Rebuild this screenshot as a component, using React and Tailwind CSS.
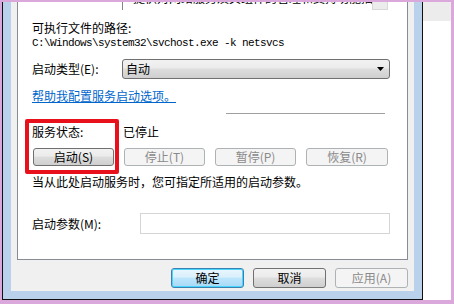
const cjk = "font-['Noto_Sans_CJK_SC',sans-serif]";

const WinButton = ({ label, kind = "normal", className = "" }) => {
  const styles = {
    normal:
      "border-[#707070] bg-[linear-gradient(#f2f2f2,#ebebeb_45%,#dddddd_50%,#cfcfcf)] text-black",
    disabled: "border-[#adb2b5] bg-[#f4f4f4] text-[#8a8a8a]",
    default:
      "border-[#3c7fb1] bg-[linear-gradient(#eaf6fd,#d9f0fc_45%,#bee6fd_50%,#a7d9f5)] text-black shadow-[inset_0_0_0_1px_#48d6fc]",
  };
  return (
    <div
      className={`${styles[kind]} ${className} flex items-center justify-center rounded-[3px] border text-[12px] leading-[14px]`}
    >
      {label}
    </div>
  );
};

export default function App() {
  return (
    <div
      className={`${cjk} flex h-[304px] w-[454px] overflow-hidden bg-[#dba8db] pb-[4px] pl-[2px] pr-[3px] pt-[2px] text-black`}
    >
      {/* window frame */}
      <div className="flex w-[421px] flex-col border-x border-b border-[#101010] bg-[#b9d1ea] px-[8px] pb-[8px]">
        <div className="flex flex-1 flex-col bg-[#f0f0f0] px-[6px]">
          {/* tab panel */}
          <div className="relative flex h-[258px] flex-col border-x border-b border-[#898c95] bg-white pl-[14px]">
            {/* description box, scrolled out of view */}
            <div className="ml-[90px] flex h-[8px] w-[266px] border-l border-[#828790]">
              <div className="flex flex-1 flex-col justify-end overflow-hidden pb-[5px] pl-[10px]">
                <div className="shrink-0 whitespace-nowrap text-[12px] leading-[14px]">
                  提供对网络服务及其组件的管理和支持功能描述
                </div>
              </div>
              <div className="h-[8px] w-[16px] border border-t-0 border-[#d8d8d8] bg-[#ececec]" />
            </div>

            <div className="mt-[11px] text-[12px] leading-[14px]">可执行文件的路径:</div>
            <div className="mt-[2px] font-['Liberation_Mono',monospace] text-[11px] leading-[12px] tracking-[-0.6px]">
              C:\Windows\system32\svchost.exe -k netsvcs
            </div>

            <div className="mt-[10px] flex h-[20px] items-center">
              <div className="w-[90px] text-[12px] leading-[14px]">启动类型(E):</div>
              <div className="flex h-[20px] w-[268px] items-center justify-between rounded-[3px] border border-[#707070] bg-[linear-gradient(#f2f2f2,#ebebeb_45%,#dddddd_50%,#cfcfcf)] pl-[3px] pr-[5px]">
                <span className="text-[12px] leading-[14px]">自动</span>
                <svg width="7" height="4" viewBox="0 0 7 4">
                  <path d="M0 0H7L3.5 4Z" fill="#000" />
                </svg>
              </div>
            </div>

            <div className="mt-[10px] text-[12px] leading-[14px] text-[#0066cc] underline">
              帮助我配置服务启动选项。
            </div>

            <div className="ml-[194px] mt-[10px] h-px w-[159px] bg-[#a0a0a0]" />

            <div className="mt-[11px] flex text-[12px] leading-[14px]">
              <div className="w-[91px]">服务状态:</div>
              <div>已停止</div>
            </div>

            <div className="ml-[1px] mt-[9px] flex gap-[10px]">
              <WinButton label="启动(S)" className="h-[18px] w-[81px]" />
              <WinButton label="停止(T)" kind="disabled" className="h-[18px] w-[81px]" />
              <WinButton label="暂停(P)" kind="disabled" className="h-[18px] w-[81px]" />
              <WinButton label="恢复(R)" kind="disabled" className="h-[18px] w-[82px]" />
            </div>

            <div className="mt-[9px] text-[12px] leading-[14px]">
              当从此处启动服务时，您可指定所适用的启动参数。
            </div>

            <div className="mt-[24px] flex h-[21px] items-center">
              <div className="w-[108px] text-[12px] leading-[14px]">启动参数(M):</div>
              <div className="h-[21px] w-[250px] border border-[#d5d5d5] bg-white" />
            </div>

            {/* annotation box */}
            <div className="absolute left-[7px] top-[117px] h-[55px] w-[94px] rounded-[2px] border-4 border-[#e8101a]" />
          </div>

          {/* dialog buttons */}
          <div className="mt-[8px] flex justify-end gap-[9px]">
            <WinButton label="确定" kind="default" className="h-[20px] w-[73px]" />
            <WinButton label="取消" className="h-[20px] w-[73px]" />
            <WinButton label="应用(A)" kind="disabled" className="h-[20px] w-[73px]" />
          </div>
        </div>
      </div>

      {/* window behind */}
      <div className="flex w-[28px] flex-col bg-white">
        <div className="h-[19px] bg-[#ececec]" />
      </div>
    </div>
  );
}
